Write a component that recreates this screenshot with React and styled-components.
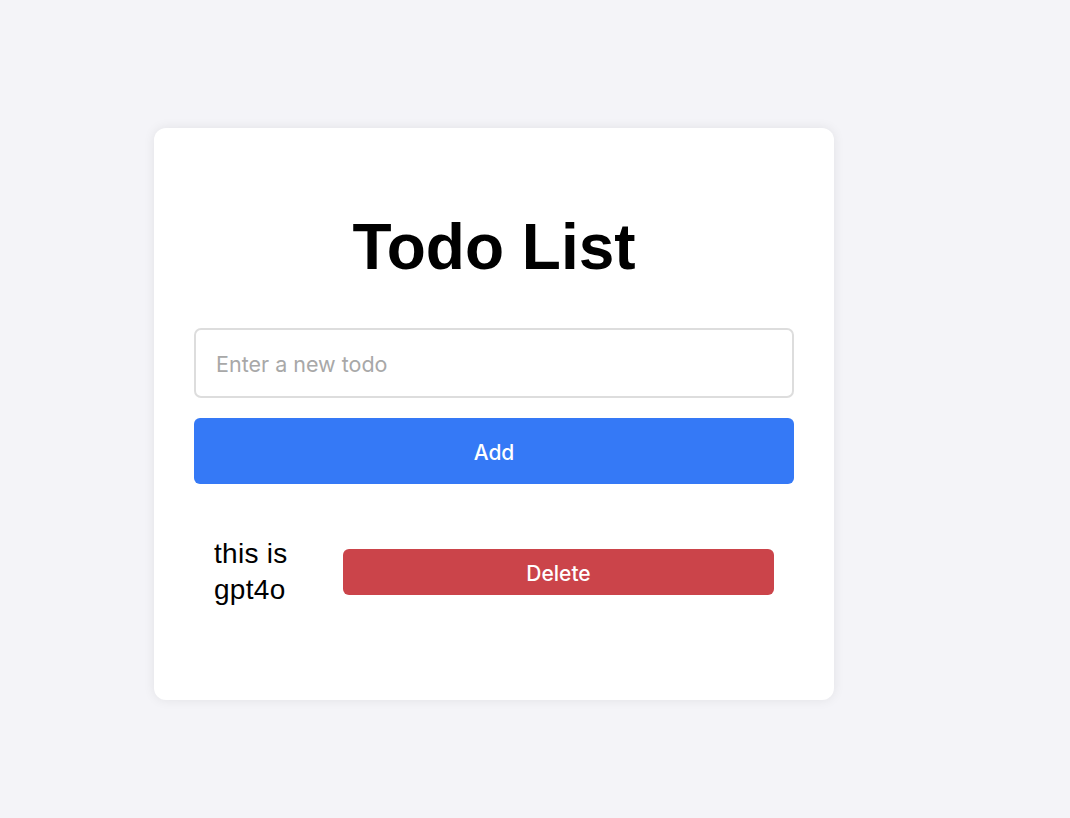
import React, { useState } from "react";
import styled, { createGlobalStyle } from "styled-components";

const GlobalStyle = createGlobalStyle`
  html, body {
    margin: 0;
    padding: 0;
    background: #f4f4f8;
  }
  body {
    font-family: "Liberation Sans", Arial, sans-serif;
  }
`;

const Page = styled.div`
  min-height: 818px;
  padding: 128px 0 0 154px;
  box-sizing: border-box;
`;

const Card = styled.div`
  width: 680px;
  box-sizing: border-box;
  background: #ffffff;
  border-radius: 12px;
  padding: 40px 40px 40px;
  box-shadow: 0 0 12px rgba(0, 0, 0, 0.08);
`;

const Title = styled.h1`
  font-family: "Liberation Sans", Arial, sans-serif;
  font-size: 64px;
  font-weight: 700;
  text-align: center;
  margin: 42px 0 44px;
  color: #000;
`;

const Input = styled.input`
  display: block;
  width: 100%;
  box-sizing: border-box;
  height: 70px;
  padding: 2px 20px 0;
  border: 2px solid #dddddd;
  border-radius: 7px;
  font-family: Inter, "Noto Sans", sans-serif;
  font-size: 21.5px;
  color: #000;
  outline: none;
  &::placeholder {
    color: #a8a8a8;
  }
`;

const Button = styled.button`
  display: flex;
  align-items: center;
  justify-content: center;
  width: ${(p) => (p.$wide ? "100%" : "431px")};
  flex: ${(p) => (p.$wide ? "none" : "0 0 431px")};
  height: ${(p) => (p.$wide ? "66px" : "46px")};
  margin-top: ${(p) => (p.$wide ? "20px" : "0")};
  padding: 2px 0 0;
  border: none;
  border-radius: 6px;
  background: ${(p) => p.$bg};
  color: #ffffff;
  font-family: Inter, "Noto Sans", sans-serif;
  font-size: 21px;
  font-weight: 500;
  cursor: pointer;
`;

const List = styled.ul`
  list-style: none;
  margin: 32px 0 32px;
  padding: 0;
`;

const Item = styled.li`
  display: flex;
  align-items: center;
  padding: 20px;
  gap: 10px;
`;

const ItemText = styled.span`
  flex: 1;
  min-width: 0;
  font-family: "Liberation Sans", Arial, sans-serif;
  font-size: 28px;
  line-height: 36px;
  letter-spacing: 0.3px;
  color: #000;
`;

export default function App() {
  const [todos] = useState(["this is gpt4o"]);
  return (
    <>
      <GlobalStyle />
      <Page>
        <Card>
          <Title>Todo List</Title>
          <Input placeholder="Enter a new todo" />
          <Button $wide $bg="#3579f6">Add</Button>
          <List>
            {todos.map((t, i) => (
              <Item key={i}>
                <ItemText>{t}</ItemText>
                <Button $bg="#cb444a">Delete</Button>
              </Item>
            ))}
          </List>
        </Card>
      </Page>
    </>
  );
}
